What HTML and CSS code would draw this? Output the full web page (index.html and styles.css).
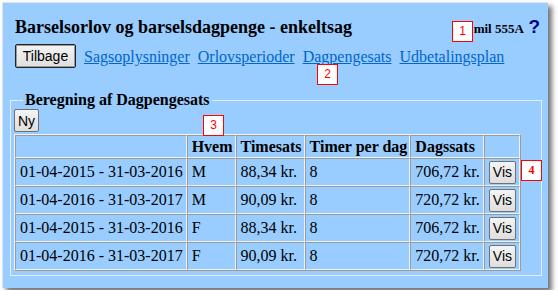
FILE: index.html
```html
<!DOCTYPE html>
<html>
<head>
  <meta charset="UTF-8">
  <title>Barselsorlov og barselsdagpenge - enkeltsag</title>
  <link rel="stylesheet" href="styles.css">
</head>
<body>
  <div class="panel">
    <div class="header">
      <h1 class="title">Barselsorlov og barselsdagpenge - enkeltsag</h1>
      <div class="user">mil 555A <span class="help">?</span></div>
    </div>

    <div class="nav">
      <button class="btn back">Tilbage</button>
      <a href="#">Sagsoplysninger</a>
      <a href="#">Orlovsperioder</a>
      <a href="#">Dagpengesats</a>
      <a href="#">Udbetalingsplan</a>
    </div>

    <fieldset class="box">
      <legend>Beregning af Dagpengesats</legend>
      <button class="btn small">Ny</button>
      <table class="rates">
        <tr>
          <th></th>
          <th>Hvem</th>
          <th>Timesats</th>
          <th>Timer per dag</th>
          <th>Dagssats</th>
          <th></th>
        </tr>
        <tr>
          <td>01-04-2015 - 31-03-2016</td>
          <td>M</td>
          <td>88,34 kr.</td>
          <td>8</td>
          <td>706,72 kr.</td>
          <td><button class="btn small">Vis</button></td>
        </tr>
        <tr>
          <td>01-04-2016 - 31-03-2017</td>
          <td>M</td>
          <td>90,09 kr.</td>
          <td>8</td>
          <td>720,72 kr.</td>
          <td><button class="btn small">Vis</button></td>
        </tr>
        <tr>
          <td>01-04-2015 - 31-03-2016</td>
          <td>F</td>
          <td>88,34 kr.</td>
          <td>8</td>
          <td>706,72 kr.</td>
          <td><button class="btn small">Vis</button></td>
        </tr>
        <tr>
          <td>01-04-2016 - 31-03-2017</td>
          <td>F</td>
          <td>90,09 kr.</td>
          <td>8</td>
          <td>720,72 kr.</td>
          <td><button class="btn small">Vis</button></td>
        </tr>
      </table>
    </fieldset>

    <!-- numbered callouts -->
    <span class="mark m1">1</span>
    <span class="mark m2">2</span>
    <span class="mark m3">3</span>
    <span class="mark m4">4</span>
  </div>
</body>
</html>
```

FILE: styles.css
```css
body {
  margin: 0;
  background-color: #fff;
  font-family: 'Liberation Serif', 'Times New Roman', serif;
  color: #000;
}

.panel {
  position: relative;
  box-sizing: border-box;
  width: 546px;
  height: 286px;
  margin: 2px;
  padding: 14px 6px 0 7px;
  background-color: #99ccff;
  border-top: 1px solid #dde6ee;
  border-left: 1px solid #dde6ee;
  box-shadow: 4px 4px 5px rgba(0, 0, 0, 0.55);
}

.header {
  display: flex;
  justify-content: space-between;
  align-items: baseline;
  padding-left: 5px;
  line-height: 20px;
}

.title {
  margin: 0;
  font-size: 18px;
  font-weight: bold;
}

.user {
  font-size: 13px;
  font-weight: bold;
  padding-right: 2px;
}

.help {
  font-family: 'Liberation Sans', Arial, sans-serif;
  font-size: 19px;
  color: #000080;
  margin-left: 2px;
}

.nav {
  display: flex;
  align-items: center;
  gap: 8px;
  margin-top: 5px;
  padding-left: 5px;
}

.nav a {
  font-size: 16px;
  color: #0066cc;
  margin-top: 2px;
}

.btn {
  font-family: 'Liberation Sans', Arial, sans-serif;
  font-size: 14px;
  color: #000;
  background: linear-gradient(#f4f4f4, #dedede);
  border: 1px solid #707070;
  border-radius: 2px;
  padding: 0 6px;
  cursor: pointer;
}

.back {
  height: 24px;
  width: 61px;
  border-color: #222;
  box-shadow: inset 0 0 0 1px #9a9a9a;
}

.small {
  height: 23px;
  padding: 0 3px;
}

.box {
  margin: 23px 0 0 0;
  padding: 0 4px 4px 3px;
  border: 1px solid #e4ecf4;
  min-width: 0;
}

.box legend {
  font-size: 16px;
  font-weight: bold;
  padding: 0 2px;
  margin-left: 9px;
}

.rates {
  margin-top: 2px;
  border-collapse: separate;
  border-spacing: 0;
  border: 1px solid;
  border-color: #eef2f6 #9a9a9a #9a9a9a #eef2f6;
  font-size: 16px;
}

.rates th,
.rates td {
  border: 1px solid;
  border-color: #9a9a9a #eef2f6 #eef2f6 #9a9a9a;
  padding: 1px 3px 1px 4px;
  text-align: left;
  white-space: nowrap;
  height: 19px;
}

.rates th {
  padding-right: 2px;
}

.rates td {
  height: 24px;
}

.mark {
  position: absolute;
  box-sizing: border-box;
  width: 21px;
  height: 21px;
  border: 1px solid #ff0000;
  background-color: #fff;
  color: #ff0000;
  font-family: 'Liberation Sans', Arial, sans-serif;
  font-size: 12px;
  line-height: 19px;
  text-align: center;
}

.m1 { left: 449px; top: 18px; }
.m2 { left: 314px; top: 61px; }
.m3 { left: 200px; top: 112px; }
.m4 { left: 518px; top: 157px; font-family: 'Liberation Serif', serif; font-weight: bold; }
```
